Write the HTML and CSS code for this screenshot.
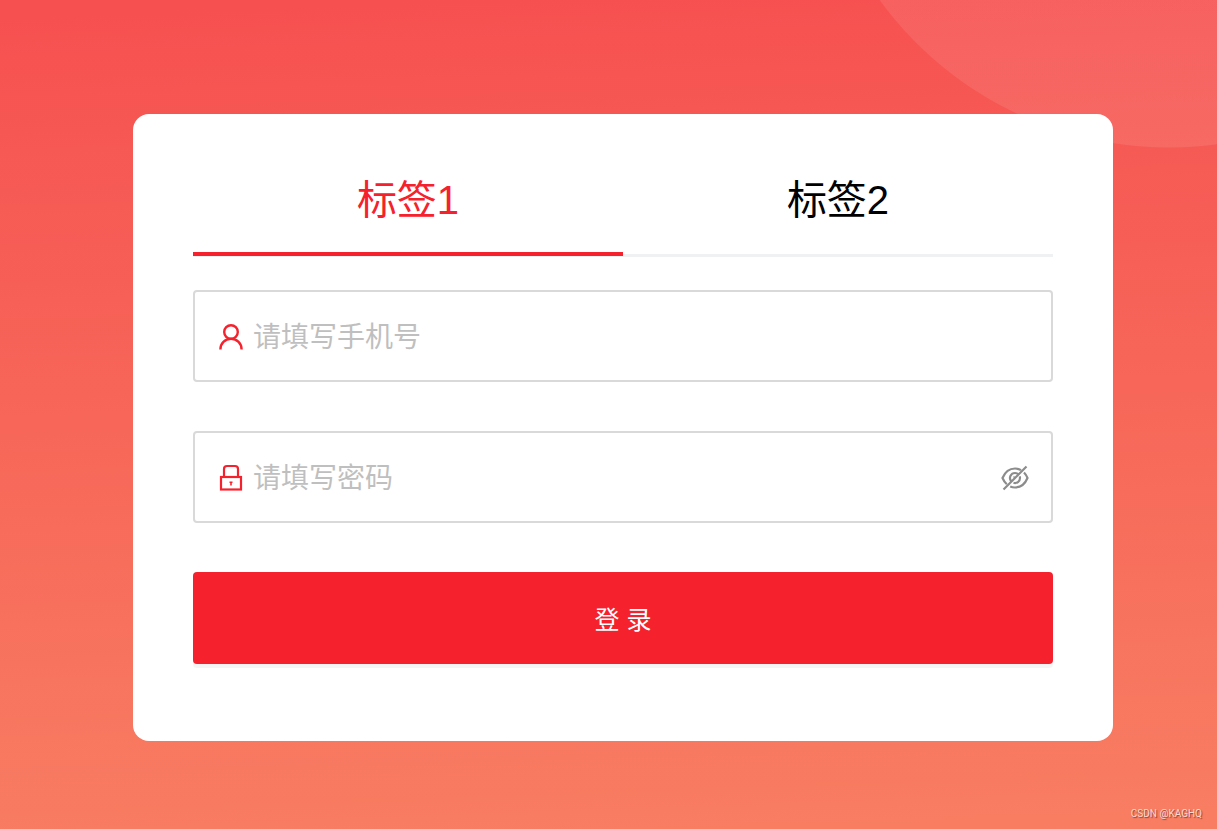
FILE: index.html
```html
<!DOCTYPE html>
<html lang="zh-CN">
<head>
<meta charset="utf-8">
<meta name="viewport" content="width=device-width, initial-scale=1">
<title>登录</title>
<link rel="stylesheet" href="styles.css">
</head>
<body class="page">
<main class="card">
  <div class="tabs" role="tablist">
    <button class="tab tab-active" type="button" role="tab" aria-selected="true">标签1</button>
    <button class="tab" type="button" role="tab" aria-selected="false">标签2</button>
  </div>
  <form class="form">
    <div class="field">
      <label class="field-icon" for="phone" aria-label="手机号">
        <svg width="28" height="28" viewBox="0 0 28 28" fill="none" stroke="currentColor" stroke-width="2.400"><circle cx="14" cy="9" r="6.800"/><path d="M3.400 26.500C3.400 20.300 8 15.900 14 15.900s10.600 4.400 10.600 10.600"/></svg>
      </label>
      <input class="input" id="phone" type="tel" placeholder="请填写手机号">
    </div>
    <div class="field">
      <label class="field-icon" for="password" aria-label="密码">
        <svg width="28" height="28" viewBox="0 0 28 28" fill="none" stroke="currentColor" stroke-width="2.200"><path d="M7 13V5q0-3 3-3h8q3 0 3 3v8"/><rect x="4" y="13" width="20" height="12.500"/><path d="M12.500 18.300h3M14 18v3.500" stroke-width="1.600"/></svg>
      </label>
      <input class="input" id="password" type="password" placeholder="请填写密码">
      <button class="eye" type="button" aria-label="显示密码">
        <svg width="28" height="28" viewBox="0 0 28 28" fill="none" stroke="currentColor" stroke-width="2.200"><path d="M20 6.200C18.200 5 16.200 4.500 14 4.500 8.500 4.500 4 8 1.500 14c1.100 2.600 2.500 4.600 4.300 6.200M9.200 22.500c1.500.700 3.100 1 4.800 1 5.500 0 10-3.500 12.500-9.500-.900-2.200-2-4-3.500-5.500"/><path d="M17 10c-.900-.700-1.900-1-3-1a5 5 0 0 0-4 8M12.500 18.800A5 5 0 0 0 19 14c0-.600-.100-1.100-.300-1.600M12.800 13.800l1-1M2.500 25.500l23-23"/></svg>
      </button>
    </div>
    <button class="submit" type="submit">登 录</button>
  </form>
</main>
<footer class="credit">CSDN @KAGHQ</footer>
</body>
</html>
```
FILE: styles.css
```css
*, *::before, *::after { box-sizing: border-box; }

.page {
  position: relative;
  margin: 0;
  min-height: 100vh;
  padding: 114px 104px 88px 133px;
  background:
    radial-gradient(circle at calc(100% - 48px) -210px, rgba(255, 255, 255, 0.09) 357px, transparent 358px),
    linear-gradient(178deg, #f65050, #f87e62);
  font-family: "Liberation Sans", "Noto Sans CJK SC", sans-serif;
}

.card {
  padding: 36px 60px 77px;
  border-radius: 16px;
  background: #fff;
}

.tabs {
  display: flex;
  border-bottom: 3px solid #eff1f2;
}

.tab {
  flex: 1;
  height: 106px;
  margin-bottom: -2px;
  padding: 0 0 2px;
  border: 0;
  border-bottom: 4px solid transparent;
  background: none;
  color: #000;
  font: inherit;
  font-size: 40px;
  line-height: 60px;
}

.tab-active {
  border-bottom-color: #f5222d;
  color: #f5222d;
}

.form {
  display: grid;
  gap: 49px;
  padding-top: 33px;
}

.field {
  display: flex;
  align-items: center;
  height: 92px;
  padding: 2px 22px 0;
  border: 2px solid #d9d9d9;
  border-radius: 4px;
}

.field-icon {
  display: flex;
  color: #f5222d;
}

.input {
  flex: 1;
  min-width: 0;
  height: 60px;
  padding: 2px 8px 0;
  border: 0;
  outline: 0;
  background: none;
  color: #333;
  font: inherit;
  font-size: 28px;
}

.input::placeholder { color: #bfbfbf; opacity: 1; }

.eye {
  display: flex;
  padding: 0;
  border: 0;
  background: none;
  color: #8c8c8c;
}

.submit {
  height: 92px;
  border: 0;
  border-radius: 4px;
  background: #f5222d;
  box-shadow: 0 4px 0 rgba(0, 0, 0, 0.04);
  color: #fff;
  font: inherit;
  font-size: 25px;
}

.credit {
  position: absolute;
  right: 15px;
  bottom: 8px;
  color: #fbd8cf;
  font-family: Roboto, sans-serif;
  font-size: 10px;
  line-height: 14px;
  text-shadow: 1px 1px 1px rgba(80, 20, 10, 0.6);
}
```
